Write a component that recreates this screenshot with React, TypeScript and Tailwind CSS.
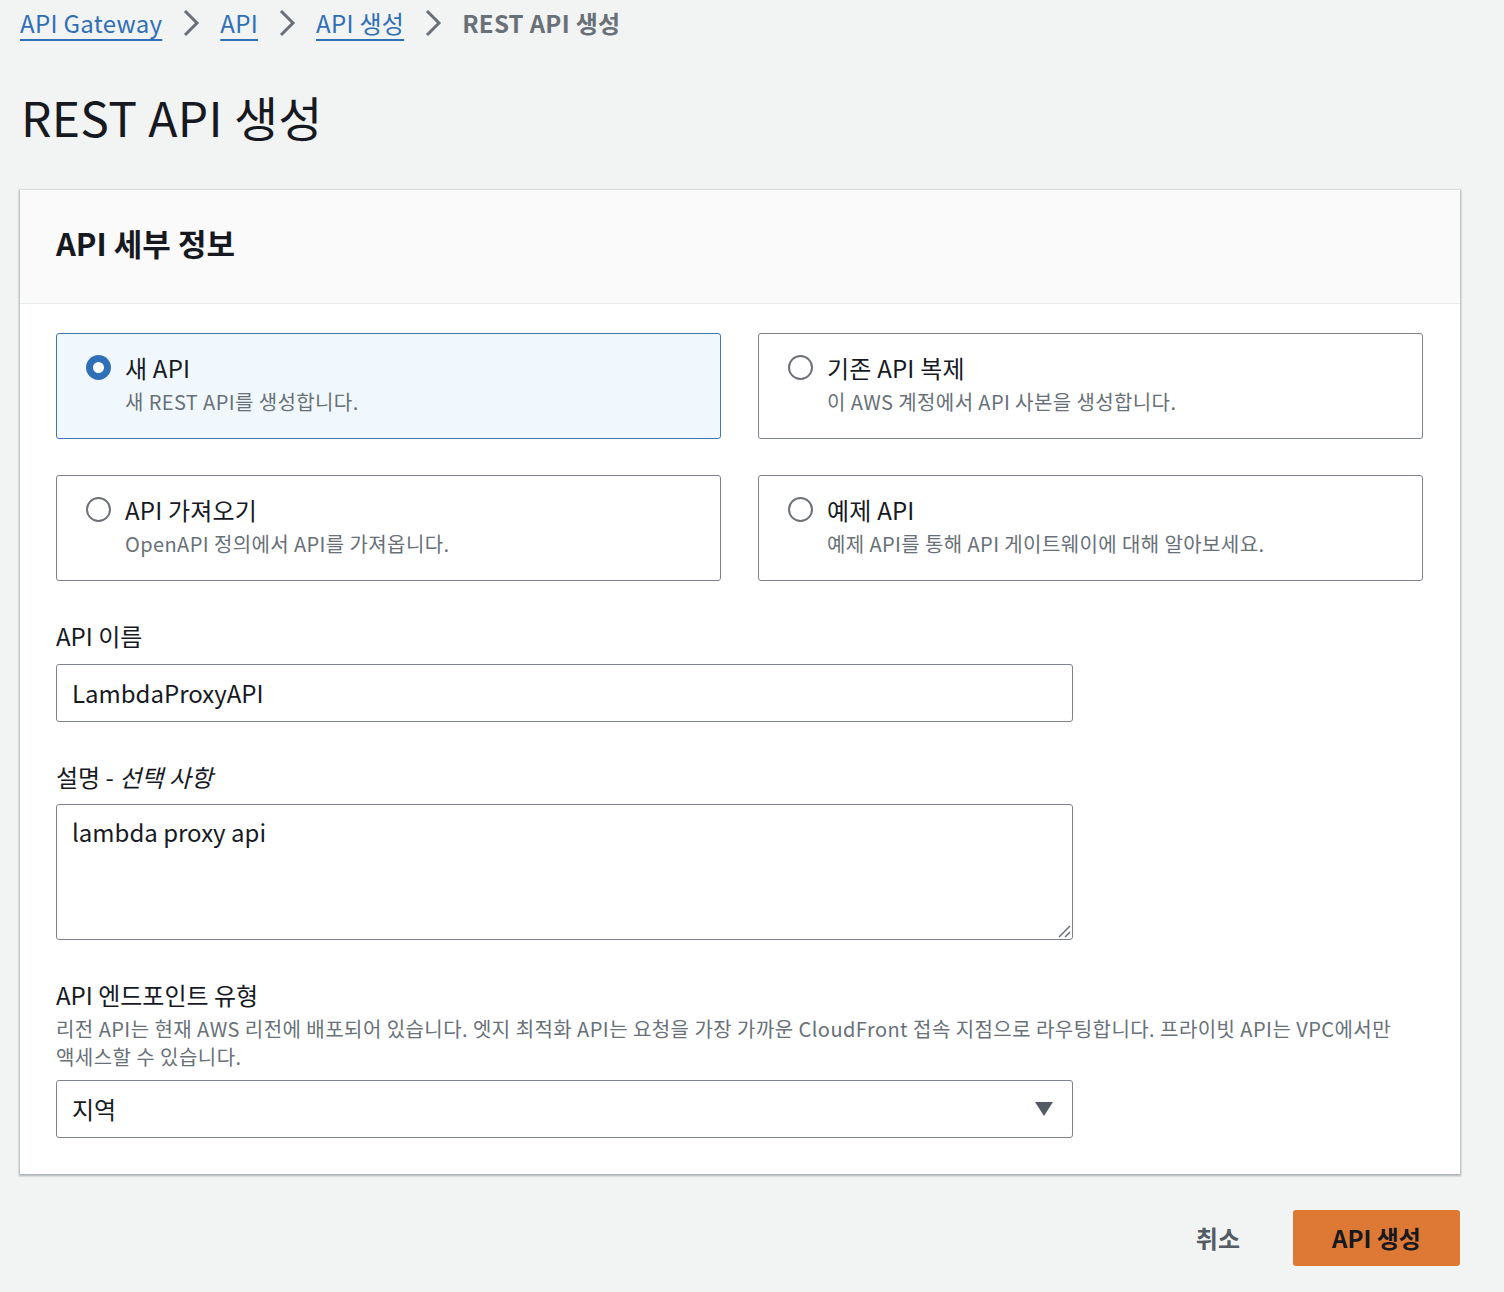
import React from "react";

const font = { fontFamily: '"Noto Sans CJK KR", "Noto Sans", sans-serif' };

function Chevron() {
  return (
    <svg width="18" height="28" viewBox="0 0 18 28" className="mx-[20px]">
      <path d="M3 2 L15 14 L3 26" fill="none" stroke="#687078" strokeWidth="3" />
    </svg>
  );
}

function RadioCard({
  title,
  desc,
  checked,
}: {
  title: string;
  desc: string;
  checked?: boolean;
}) {
  return (
    <div
      className={
        "h-[106px] rounded-[3px] border pl-[29px] pt-[17px] flex gap-[14px] " +
        (checked ? "bg-[#f1f8fd] border-[#3f78b9]" : "bg-white border-[#7d8289]")
      }
    >
      <div className="pt-[4px]">
        {checked ? (
          <div className="w-[25px] h-[25px] rounded-full border-[7px] border-[#2f6fb7] bg-white" />
        ) : (
          <div className="w-[25px] h-[25px] rounded-full border-2 border-[#6d7178] bg-white" />
        )}
      </div>
      <div>
        <div className="text-[24px] leading-[34px] text-[#16191f] tracking-[0.2px]">{title}</div>
        <div className="text-[20px] leading-[30px] text-[#687078] mt-[2px] tracking-[0.4px]">{desc}</div>
      </div>
    </div>
  );
}

export default function App() {
  return (
    <div className="min-h-[1292px] bg-[#f2f3f3] px-5 pt-[3px]" style={font}>
      <nav className="flex items-center h-[40px] text-[24px] tracking-[0.3px]">
        <a className="text-[#2f6fb7] underline underline-offset-[6px] decoration-2">API Gateway</a>
        <Chevron />
        <a className="text-[#2f6fb7] underline underline-offset-[6px] decoration-2">API</a>
        <Chevron />
        <a className="text-[#2f6fb7] underline underline-offset-[6px] decoration-2">API 생성</a>
        <Chevron />
        <span className="text-[#687078] font-bold">REST API 생성</span>
      </nav>

      <h1 className="text-[48px] leading-[60px] text-[#16191f] mt-[43px] ml-[1px] tracking-[0.3px]">REST API 생성</h1>

      <div className="mt-[44px] w-[1440px] bg-white shadow-[0_1px_2px_1px_rgba(0,28,36,0.3)]">
        <div className="h-[114px] bg-[#fafafa] border-b border-[#eaeded] px-9 pb-[6px] flex items-center">
          <h2 className="text-[31px] font-bold text-[#16191f]">API 세부 정보</h2>
        </div>

        <div className="px-9 pt-[29px] pb-[36px]">
          <div className="grid grid-cols-2 gap-x-[37px] gap-y-[36px] w-[1367px]">
            <RadioCard title="새 API" desc="새 REST API를 생성합니다." checked />
            <RadioCard title="기존 API 복제" desc="이 AWS 계정에서 API 사본을 생성합니다." />
            <RadioCard title="API 가져오기" desc="OpenAPI 정의에서 API를 가져옵니다." />
            <RadioCard title="예제 API" desc="예제 API를 통해 API 게이트웨이에 대해 알아보세요." />
          </div>

          <div className="mt-[37px] text-[24px] leading-[36px] text-[#16191f]">API 이름</div>
          <div className="mt-[10px] w-[1017px] h-[58px] border border-[#7d8289] rounded-[3px] flex items-center px-[15px] text-[24px] text-[#16191f]">
            LambdaProxyAPI
          </div>

          <div className="mt-[37px] text-[24px] leading-[36px] text-[#16191f]">
            설명 - <i>선택 사항</i>
          </div>
          <div className="relative mt-[9px] w-[1017px] h-[136px] border border-[#7d8289] rounded-[3px] px-[15px] pt-[9px] text-[24px] text-[#16191f]">
            lambda proxy api
            <svg width="14" height="14" viewBox="0 0 14 14" className="absolute right-[1px] bottom-[1px]">
              <path d="M13 2 L2 13 M13 8 L8 13" stroke="#687078" strokeWidth="1.5" />
            </svg>
          </div>

          <div className="mt-[37px] text-[24px] leading-[36px] text-[#16191f]">API 엔드포인트 유형</div>
          <div className="mt-[2px] text-[20px] leading-[28px] text-[#687078] w-[1367px] break-keep tracking-[0.45px]">
            리전 API는 현재 AWS 리전에 배포되어 있습니다. 엣지 최적화 API는 요청을 가장 가까운 CloudFront 접속 지점으로 라우팅합니다. 프라이빗 API는 VPC에서만 액세스할 수 있습니다.
          </div>
          <div className="mt-[9px] w-[1017px] h-[58px] border border-[#7d8289] rounded-[3px] flex items-center justify-between pl-[15px] pr-[19px] text-[24px] text-[#16191f]">
            <span>지역</span>
            <svg width="18" height="14" viewBox="0 0 18 14">
              <path d="M0 0 H18 L9 14 Z" fill="#545b64" />
            </svg>
          </div>
        </div>
      </div>

      <div className="w-[1440px] flex justify-end items-center mt-[36px]">
        <button className="text-[24px] font-bold text-[#545b64] px-[28px] h-[56px]">취소</button>
        <button className="ml-[25px] w-[167px] h-[56px] rounded-[3px] bg-[#dd7835] text-[24px] font-bold text-[#16191f]">
          API 생성
        </button>
      </div>
    </div>
  );
}
